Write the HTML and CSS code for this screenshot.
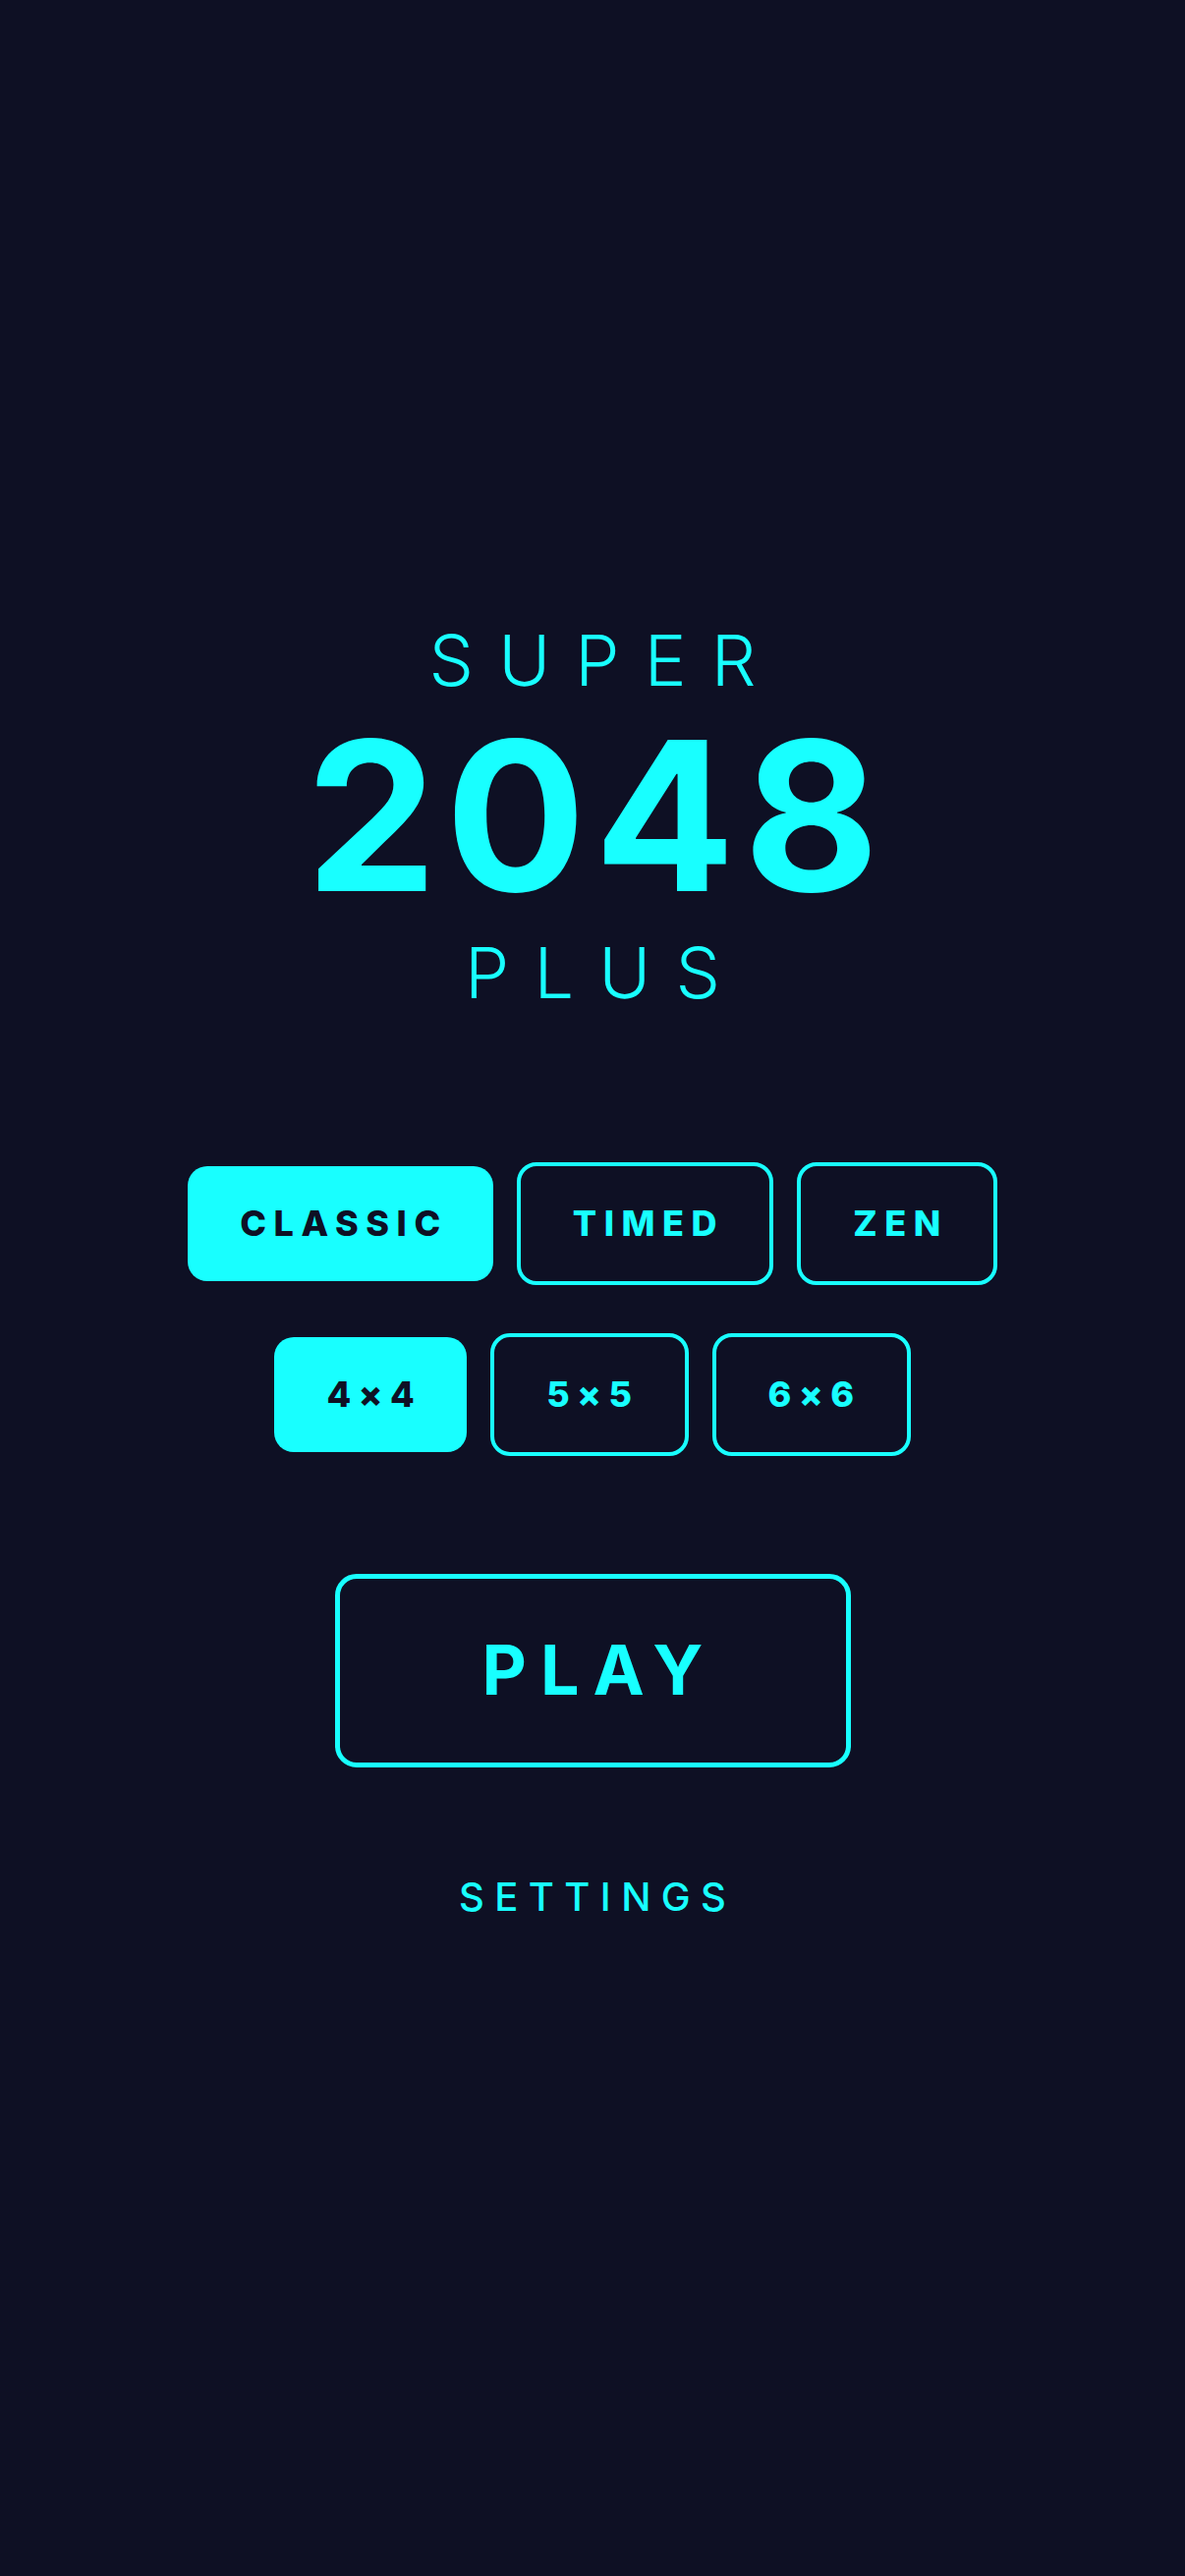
FILE: index.html
```html
<!DOCTYPE html>
<html lang="en">
<head>
<meta charset="utf-8">
<title>Super 2048 Plus</title>
<link rel="stylesheet" href="styles.css">
</head>
<body>
<main class="screen">
  <header class="title">
    <div class="title-super">SUPER</div>
    <div class="title-num">2048</div>
    <div class="title-plus">PLUS</div>
  </header>
  <div class="options">
    <div class="opt-row">
      <button class="opt opt-active">CLASSIC</button>
      <button class="opt">TIMED</button>
      <button class="opt">ZEN</button>
    </div>
    <div class="opt-row">
      <button class="opt opt-active">4×4</button>
      <button class="opt">5×5</button>
      <button class="opt">6×6</button>
    </div>
  </div>
  <button class="play">PLAY</button>
  <button class="settings">SETTINGS</button>
</main>
</body>
</html>
```
FILE: styles.css
```css
* { box-sizing: border-box; }
html, body {
  margin: 0;
  padding: 0;
  background: #0e1024;
}
body {
  font-family: "Inter", "Roboto", "Liberation Sans", sans-serif;
  color: #18ffff;
}
.screen {
  min-height: 2622px;
  display: flex;
  flex-direction: column;
  align-items: center;
  justify-content: center;
  padding-bottom: 36px;
}
.title {
  display: flex;
  flex-direction: column;
  align-items: center;
}
.title-super, .title-plus {
  font-size: 72px;
  line-height: 1;
  font-weight: 300;
  letter-spacing: 0.35em;
  padding-left: 0.35em;
}
.title-num {
  font-size: 212px;
  line-height: 1;
  font-weight: 700;
  margin-top: 16px;
  margin-bottom: 18px;
  letter-spacing: 0.04em;
  padding-left: 0.04em;
}
.options {
  margin-top: 157px;
  display: flex;
  flex-direction: column;
  align-items: center;
  gap: 49px;
}
.opt-row {
  display: flex;
  align-items: center;
  gap: 24px;
}
button {
  font-family: inherit;
  cursor: pointer;
  background: transparent;
  color: #18ffff;
}
.opt {
  border: 4px solid #18ffff;
  border-radius: 20px;
  height: 125px;
  padding: 0 46px 0 53px;
  font-size: 36px;
  font-weight: 800;
  line-height: 1;
  letter-spacing: 0.21em;
}
.opt-active {
  background: #18ffff;
  color: #0e1024;
  border: 0;
  height: 117px;
}
.play {
  margin-top: 120px;
  width: 525px;
  height: 197px;
  border: 5px solid #18ffff;
  border-radius: 22px;
  font-size: 70px;
  font-weight: 700;
  line-height: 1;
  letter-spacing: 0.2em;
  padding: 0 0 0 0.2em;
}
.settings {
  margin-top: 112px;
  border: 0;
  padding: 0 0 0 0.26em;
  font-size: 40px;
  line-height: 1;
  font-weight: 500;
  letter-spacing: 0.26em;
}
```
